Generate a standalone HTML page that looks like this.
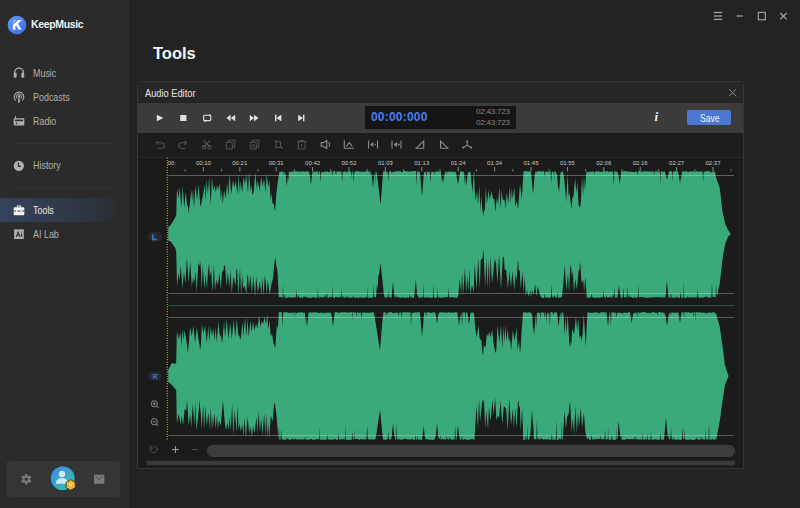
<!DOCTYPE html>
<html><head><meta charset="utf-8">
<style>
*{margin:0;padding:0;box-sizing:border-box}
html,body{width:800px;height:508px;overflow:hidden;background:#232323;font-family:"Liberation Sans",sans-serif}
.abs{position:absolute}
#side{left:0;top:0;width:129px;height:508px;background:#2b2b2b}
.nav{position:absolute;left:33px;font-size:10.5px;color:#b0b0b0;line-height:12px;transform:scaleX(0.85);transform-origin:0 0}
.sep{position:absolute;left:12px;width:100px;height:1px;background:#333}
#dlg{left:137px;top:81px;width:607px;height:388px;border:1px solid #363636;border-radius:4px 4px 0 0;background:#1b1b1b;overflow:hidden}
</style></head><body>
<div id="side" class="abs"></div>
<div class="abs" style="left:0;top:198px;width:118px;height:24px;background:linear-gradient(90deg,#33445e 0%,#303a4a 50%,#2d323b 85%,rgba(43,43,43,0) 100%)"></div>
<div class="sep" style="top:143px"></div>
<div class="sep" style="top:187px"></div>
<div class="abs" style="left:6px;top:461px;width:114px;height:36px;background:#353535;border-radius:4px"></div>

<div class="abs" style="left:31px;top:17px;font-size:10.5px;font-weight:bold;color:#f2f2f2;letter-spacing:-0.35px;line-height:14px">KeepMusic</div>
<div class="nav" style="top:67px">Music</div>
<div class="nav" style="top:91px">Podcasts</div>
<div class="nav" style="top:115px">Radio</div>
<div class="nav" style="top:159px">History</div>
<div class="nav" style="top:204px;color:#ececec">Tools</div>
<div class="nav" style="top:228px">AI Lab</div>

<div class="abs" style="left:153px;top:43px;font-size:16.5px;font-weight:bold;color:#f4f4f4;line-height:20px">Tools</div>

<div id="dlg" class="abs">
  <div class="abs" style="left:0;top:0;width:605px;height:21px;background:#262626"></div>
  <div class="abs" style="left:0;top:20px;width:605px;height:1px;background:#212121"></div>
  <div class="abs" style="left:0;top:21px;width:605px;height:30px;background:#3b3b3b"></div>
  <div class="abs" style="left:0;top:51px;width:605px;height:24px;background:#1d1d1d"></div>
  <div class="abs" style="left:0;top:75px;width:605px;height:1px;background:#2a2a2a"></div>
</div>
<div class="abs" style="left:145px;top:87.5px;font-size:10.3px;color:#e6e6e6;line-height:12px;transform:scaleX(0.9);transform-origin:0 0">Audio Editor</div>

<div class="abs" style="left:365px;top:106px;width:151px;height:23px;background:#151515;border-radius:1px"></div>
<div class="abs" style="left:371px;top:110px;font-size:12px;font-weight:bold;color:#4a7ef0;line-height:14px;letter-spacing:0.2px">00:00:000</div>
<div class="abs" style="left:476px;top:107px;font-size:8px;color:#858585;line-height:10px;letter-spacing:-0.2px">02:43:723</div>
<div class="abs" style="left:476px;top:118px;font-size:8px;color:#858585;line-height:10px;letter-spacing:-0.2px">02:43:723</div>
<div class="abs" style="left:687px;top:110px;width:44px;height:15px;background:#4a78d2;border-radius:2px"></div>
<div class="abs" style="left:699.5px;top:111.5px;font-size:10.3px;color:#f4f4f4;line-height:13px;transform:scaleX(0.83);transform-origin:0 0">Save</div>
<div class="abs" style="left:654.5px;top:109px;font-size:13px;font-family:'Liberation Serif',serif;font-style:italic;font-weight:bold;color:#f0f0f0;line-height:16px">i</div>

<svg class="abs" style="left:0;top:0" width="800" height="508" viewBox="0 0 800 508">
  <!-- waveform -->
  <g>
    <path d="M167.00,229.00 L168.00,227.50 L170.70,225.00 L173.30,221.00 L176.20,215.50 L176.80,194.00 L177.10,188.19 L178.52,198.59 L179.83,187.19 L181.27,207.63 L182.64,185.65 L184.31,208.61 L185.44,191.78 L187.13,204.64 L187.98,206.53 L188.40,213.00 L189.84,203.49 L191.32,189.42 L192.13,200.96 L193.00,188.58 L194.07,208.18 L195.38,185.12 L197.10,200.22 L198.61,184.00 L200.14,204.18 L201.00,207.00 L201.24,203.68 L203.14,194.98 L204.72,184.23 L205.77,201.27 L206.65,179.42 L207.89,193.64 L209.11,177.24 L210.84,205.07 L211.87,176.65 L213.19,190.70 L214.43,185.54 L215.92,192.35 L217.02,184.66 L218.18,189.76 L219.82,183.49 L220.89,200.42 L221.75,189.21 L222.75,203.74 L222.80,204.00 L224.04,190.03 L225.65,198.55 L227.16,182.33 L228.42,196.62 L229.51,173.73 L231.20,194.69 L232.97,179.85 L234.21,187.66 L235.71,181.26 L237.60,194.34 L238.68,174.02 L239.85,192.71 L240.73,180.65 L242.17,192.82 L243.63,176.50 L244.93,184.41 L246.26,174.63 L248.01,192.68 L248.98,172.49 L250.68,191.59 L251.69,184.81 L252.40,195.00 L253.53,192.79 L255.37,172.61 L256.83,189.04 L257.75,180.44 L259.61,191.02 L261.18,176.90 L262.89,186.63 L264.01,177.69 L265.60,192.94 L266.65,174.36 L268.39,187.05 L269.50,180.11 L270.53,199.59 L271.62,193.13 L272.49,203.54 L273.69,203.61 L274.64,209.53 L275.10,211.00 L276.42,192.68 L277.94,181.11 L279.38,171.91 L279.70,171.00 L280.01,171.70 L281.17,171.73 L281.70,171.92 L282.22,171.32 L283.42,171.90 L283.91,176.02 L284.40,171.74 L285.34,172.42 L286.29,181.24 L286.80,186.00 L287.76,176.79 L288.33,180.45 L288.91,171.62 L289.56,171.73 L290.24,172.19 L291.72,171.47 L293.05,171.53 L294.49,171.60 L295.05,171.00 L295.61,171.48 L296.12,171.60 L297.34,171.31 L297.95,171.17 L298.48,171.03 L299.02,171.91 L299.92,171.67 L300.53,171.19 L301.14,171.20 L301.83,172.10 L303.31,171.14 L303.81,171.17 L304.32,171.50 L305.37,171.85 L306.92,171.28 L307.28,171.70 L307.64,171.21 L308.31,171.59 L309.23,172.18 L310.28,177.77 L310.59,183.14 L310.90,183.18 L311.00,184.00 L311.71,177.88 L312.29,172.81 L312.87,171.45 L313.19,171.28 L313.93,171.63 L314.45,171.68 L314.97,171.66 L316.00,171.82 L316.80,171.47 L317.16,171.00 L317.52,171.71 L317.98,171.52 L318.40,175.02 L318.83,171.61 L319.81,171.09 L320.38,182.47 L320.96,171.93 L321.91,171.91 L322.37,173.60 L322.83,171.38 L323.64,171.96 L325.18,171.72 L325.71,171.03 L326.24,171.82 L327.12,171.26 L328.62,172.17 L329.75,171.38 L331.26,171.42 L331.95,171.49 L332.44,176.92 L332.93,171.03 L333.96,171.34 L334.54,171.02 L335.12,171.79 L335.55,171.84 L336.03,175.66 L336.51,171.69 L337.66,171.22 L338.29,171.00 L338.92,171.53 L339.49,171.77 L340.61,171.67 L341.52,171.21 L342.12,182.18 L342.71,171.85 L343.88,171.69 L344.68,171.60 L345.89,171.40 L346.53,172.21 L347.17,171.80 L347.97,171.54 L348.52,171.00 L349.06,171.41 L350.22,171.32 L351.29,171.90 L351.74,178.53 L352.20,171.48 L352.78,171.13 L353.30,183.46 L353.81,171.78 L354.13,171.32 L354.51,174.79 L354.89,171.36 L355.75,171.51 L356.31,171.00 L356.86,171.25 L357.34,171.52 L358.32,171.20 L358.80,171.01 L359.29,171.63 L360.16,172.02 L361.37,171.28 L362.71,172.08 L363.63,172.00 L364.25,171.04 L364.88,171.89 L365.30,171.10 L365.85,171.08 L366.41,171.83 L367.09,171.15 L368.09,171.02 L368.89,172.09 L370.46,171.50 L370.93,176.62 L371.41,171.69 L371.88,175.73 L372.22,179.14 L372.56,183.12 L373.00,188.00 L373.37,184.04 L373.73,179.72 L374.10,176.29 L375.23,171.46 L375.55,184.93 L375.87,171.76 L376.47,171.60 L376.95,174.50 L377.43,178.06 L378.36,186.08 L379.41,195.06 L380.21,201.77 L380.60,205.00 L380.69,203.80 L381.17,197.46 L382.10,185.02 L383.11,171.61 L384.69,171.31 L386.20,171.93 L387.62,171.69 L388.23,181.19 L388.84,171.77 L389.83,171.34 L390.38,171.00 L390.94,171.47 L391.25,171.23 L391.77,173.58 L392.29,171.94 L393.19,171.53 L393.72,172.79 L394.26,171.39 L395.46,171.84 L396.82,171.03 L398.03,171.31 L399.03,171.10 L399.40,171.34 L399.77,171.25 L400.89,171.61 L402.45,172.19 L403.69,171.09 L404.89,171.05 L406.42,171.50 L406.88,171.01 L407.35,171.61 L407.70,171.50 L408.83,171.44 L409.71,171.67 L410.60,171.36 L411.21,171.75 L411.53,171.01 L411.84,171.39 L412.95,171.06 L414.54,171.09 L416.04,171.24 L416.51,186.25 L416.98,171.52 L418.12,171.56 L419.70,171.72 L420.42,176.83 L421.22,187.02 L421.70,193.15 L422.00,197.00 L422.19,194.61 L422.90,185.66 L423.40,179.14 L423.91,172.72 L425.10,171.88 L425.94,171.62 L426.56,177.43 L427.17,171.36 L427.71,171.68 L428.90,171.90 L429.69,171.88 L430.34,182.95 L430.98,171.04 L431.33,171.10 L431.78,173.57 L432.23,171.54 L432.60,171.63 L433.13,172.56 L433.67,171.37 L434.40,171.84 L434.82,176.23 L435.24,171.07 L435.65,171.75 L437.02,171.81 L437.47,171.08 L437.92,171.37 L438.80,171.39 L439.95,172.10 L440.98,171.08 L441.31,181.29 L441.65,174.94 L442.46,179.94 L443.00,182.97 L443.00,183.00 L443.54,179.81 L444.03,176.89 L444.93,172.22 L445.81,171.37 L446.24,175.72 L446.66,171.12 L447.60,172.10 L449.14,171.53 L450.55,171.93 L450.96,171.43 L451.37,171.89 L451.89,171.40 L452.32,171.30 L452.75,171.39 L453.22,171.96 L454.36,171.68 L455.14,172.06 L456.02,171.71 L456.50,175.63 L456.98,178.37 L457.87,184.08 L458.00,185.00 L459.02,177.94 L459.70,174.04 L460.38,171.17 L461.73,171.29 L462.55,171.63 L463.91,171.67 L464.33,185.94 L464.75,171.97 L465.53,179.70 L466.20,186.00 L467.05,178.01 L467.64,174.85 L468.23,171.81 L469.28,172.15 L470.52,171.85 L471.92,186.18 L472.37,192.50 L472.40,193.00 L472.81,187.21 L473.45,177.79 L473.82,172.66 L474.19,171.97 L474.55,189.00 L475.47,200.87 L477.13,190.93 L478.00,203.91 L479.44,185.50 L480.28,210.07 L481.28,194.89 L482.34,209.55 L483.40,216.00 L483.79,211.15 L484.80,210.09 L485.79,187.53 L486.93,203.72 L488.63,189.86 L489.72,199.42 L491.52,191.15 L492.92,198.43 L494.25,199.33 L495.11,208.55 L495.50,211.00 L496.79,197.81 L498.17,204.12 L499.27,186.68 L500.80,208.21 L501.61,189.68 L502.82,200.08 L504.40,199.34 L504.80,202.00 L505.37,209.27 L506.53,192.79 L508.29,203.54 L509.79,186.24 L510.88,203.14 L511.84,187.34 L512.65,199.29 L514.38,186.95 L515.27,206.48 L516.86,200.70 L517.80,209.00 L518.18,207.43 L520.03,183.38 L521.78,199.69 L523.45,171.83 L524.07,171.01 L524.69,171.21 L525.48,171.19 L526.91,171.31 L527.32,171.01 L527.73,171.47 L528.67,171.39 L529.21,171.03 L529.75,171.46 L530.92,171.78 L531.53,177.55 L532.08,183.59 L532.63,189.84 L532.94,193.34 L533.00,194.00 L533.75,185.54 L534.72,174.49 L535.66,171.20 L536.19,171.42 L536.73,171.73 L537.32,171.68 L538.65,171.14 L539.24,171.03 L539.83,171.09 L540.74,171.22 L541.74,171.71 L542.43,171.41 L542.78,171.07 L543.14,171.07 L544.27,171.77 L544.75,177.43 L545.22,171.82 L545.87,171.40 L546.32,171.00 L546.76,171.70 L547.94,171.79 L549.15,171.65 L549.57,172.23 L549.98,171.11 L550.62,171.61 L551.20,184.07 L551.78,171.16 L552.77,171.66 L553.72,171.99 L554.07,180.12 L554.42,171.52 L555.36,171.24 L556.91,174.27 L557.59,181.07 L558.09,188.18 L558.59,190.94 L558.60,191.00 L559.22,184.85 L559.56,192.13 L559.91,178.53 L560.69,171.67 L561.56,172.19 L562.98,171.15 L564.40,179.71 L566.19,202.24 L567.62,173.44 L568.62,196.88 L569.51,192.31 L570.51,201.51 L571.70,209.00 L572.34,198.17 L573.48,196.49 L575.09,178.33 L576.54,192.89 L577.36,181.28 L578.67,205.98 L579.90,206.69 L580.00,208.00 L580.89,203.26 L581.98,176.39 L583.14,195.38 L583.99,174.96 L584.94,190.59 L586.40,171.49 L587.63,171.91 L588.98,172.19 L590.42,171.49 L591.45,172.09 L592.58,171.52 L594.08,171.90 L594.40,175.16 L594.72,171.73 L595.56,171.37 L596.75,171.50 L597.10,171.60 L597.44,171.40 L597.79,171.63 L598.63,171.07 L599.06,171.05 L599.50,171.91 L600.67,172.04 L601.69,171.27 L603.04,172.08 L603.74,171.15 L604.88,171.00 L605.72,171.90 L606.13,171.00 L606.55,171.82 L607.20,171.03 L607.71,171.00 L608.21,171.90 L608.79,172.12 L610.37,171.25 L611.26,172.08 L612.06,171.42 L613.13,171.20 L613.74,185.73 L614.35,171.63 L614.82,171.06 L615.53,171.38 L617.03,171.86 L617.76,172.13 L618.81,177.50 L619.19,180.44 L619.56,183.69 L619.60,184.00 L620.03,180.41 L620.56,179.43 L621.09,171.73 L622.19,171.27 L623.09,171.80 L623.97,171.11 L625.55,171.05 L626.03,172.19 L626.52,171.60 L627.07,171.29 L627.66,171.00 L628.24,171.76 L628.76,171.90 L629.25,171.02 L629.74,171.99 L630.07,171.90 L631.06,171.60 L631.84,171.77 L632.80,171.94 L633.91,172.01 L635.20,172.14 L635.97,171.20 L637.18,171.79 L637.63,176.36 L638.09,171.79 L638.60,171.27 L639.78,171.04 L640.98,171.69 L642.45,171.50 L642.80,171.00 L643.16,171.43 L643.85,171.91 L644.43,171.00 L645.01,171.57 L645.80,171.29 L646.55,171.62 L646.86,171.15 L647.18,171.53 L647.71,171.11 L649.14,171.69 L649.52,171.01 L649.91,171.83 L650.92,171.22 L651.37,171.26 L651.81,171.97 L652.15,171.91 L653.73,171.04 L654.19,175.62 L654.65,171.24 L655.75,171.42 L656.19,171.12 L656.63,171.08 L656.96,171.92 L658.29,171.24 L658.68,172.39 L659.07,171.46 L660.21,171.61 L660.63,184.91 L661.05,171.04 L661.71,171.07 L662.65,172.04 L663.84,171.56 L664.84,171.46 L666.22,176.69 L666.64,178.37 L667.00,180.00 L667.06,179.74 L667.54,177.68 L668.01,175.54 L668.47,174.11 L669.38,171.25 L670.36,171.27 L670.91,171.26 L671.45,171.02 L671.91,171.72 L672.35,181.91 L672.79,171.27 L673.41,171.77 L674.04,171.25 L674.67,171.72 L675.78,171.08 L676.20,171.33 L676.61,171.88 L677.20,171.62 L677.86,171.15 L678.24,172.45 L678.62,175.16 L678.95,176.79 L679.40,179.80 L679.85,182.15 L680.00,183.00 L680.38,180.85 L681.13,176.44 L681.53,176.78 L681.93,171.81 L683.01,171.22 L683.41,171.21 L683.81,171.04 L684.13,171.68 L685.54,171.36 L686.81,171.26 L688.10,172.15 L689.57,171.43 L690.09,171.00 L690.61,171.39 L690.97,171.28 L691.38,171.92 L691.80,171.16 L692.46,171.20 L693.72,171.42 L694.06,171.20 L694.39,171.15 L695.21,171.66 L696.51,171.06 L696.95,171.26 L697.39,171.40 L697.74,171.70 L698.81,171.35 L699.19,171.00 L699.58,171.89 L700.39,171.47 L700.93,171.02 L701.46,171.62 L702.62,171.77 L703.12,182.83 L703.62,171.63 L704.48,171.83 L704.93,171.09 L705.37,171.88 L706.02,171.05 L706.75,171.37 L707.71,171.18 L708.50,171.00 L709.04,171.05 L709.58,171.54 L710.24,171.55 L710.71,173.68 L711.18,171.62 L711.99,172.16 L712.92,171.72 L713.53,171.14 L714.14,171.70 L715.06,171.99 L715.60,176.00 L719.80,188.00 L722.50,212.00 L725.30,224.00 L728.00,230.00 L730.80,234.00 L730.80,234.00 L728.00,237.00 L725.30,243.50 L722.50,258.70 L719.80,283.50 L716.68,297.62 L716.12,284.50 L715.60,294.00 L715.57,297.77 L714.44,296.87 L713.19,297.09 L712.57,297.51 L711.98,282.41 L711.39,297.14 L711.00,297.99 L710.59,296.76 L710.18,297.55 L709.31,297.63 L708.30,297.89 L707.65,296.39 L707.01,297.49 L706.71,297.34 L706.23,294.82 L705.75,297.24 L704.70,297.11 L703.80,297.55 L703.38,297.45 L703.03,297.99 L702.69,297.69 L701.70,297.79 L700.59,297.78 L699.91,297.42 L699.32,297.84 L698.73,297.85 L698.25,297.38 L697.74,288.92 L697.22,297.05 L695.80,297.60 L694.38,297.38 L693.43,297.33 L692.49,297.19 L691.97,298.00 L691.44,297.89 L690.14,296.80 L689.68,297.31 L689.24,297.99 L688.80,297.52 L688.10,297.14 L687.76,295.55 L687.41,297.50 L686.47,297.61 L685.34,297.74 L684.20,297.90 L683.82,281.63 L683.44,297.73 L682.44,297.51 L681.96,297.93 L681.48,297.68 L681.07,297.14 L680.52,291.06 L679.97,297.96 L679.13,297.74 L678.34,297.82 L677.43,297.49 L676.79,296.29 L676.15,297.25 L675.12,297.95 L674.70,297.52 L674.27,297.15 L673.26,297.77 L672.94,297.84 L672.62,297.37 L671.95,297.87 L671.49,297.98 L670.88,292.41 L670.26,297.83 L669.19,297.55 L668.58,298.00 L667.97,291.67 L667.37,285.75 L667.00,282.00 L666.72,281.43 L666.07,291.69 L665.41,297.05 L664.80,297.92 L664.31,296.92 L663.81,297.13 L662.86,297.67 L662.48,297.70 L661.95,296.22 L661.42,297.66 L659.94,297.11 L658.98,297.20 L658.37,297.26 L657.34,297.36 L655.74,297.00 L654.99,297.61 L654.50,297.99 L654.00,297.09 L653.25,297.20 L652.74,297.16 L652.23,297.37 L651.12,297.88 L649.87,297.30 L648.86,297.97 L648.12,297.30 L647.53,297.84 L647.04,297.96 L646.56,297.39 L645.40,297.99 L644.21,297.01 L643.27,297.56 L641.77,296.81 L640.78,297.02 L639.37,297.37 L638.73,297.27 L638.27,284.66 L637.80,297.48 L637.09,297.35 L636.56,298.00 L636.03,297.66 L635.27,297.66 L634.82,296.11 L634.38,297.49 L632.79,297.97 L631.50,297.00 L630.09,296.95 L629.70,297.34 L629.22,294.09 L628.74,297.09 L628.13,297.75 L627.81,297.66 L627.24,285.99 L626.67,297.59 L625.12,297.06 L624.08,297.59 L623.45,287.64 L622.83,297.27 L622.02,297.77 L621.50,297.95 L620.98,297.76 L619.88,292.54 L619.00,285.00 L618.74,287.18 L618.29,290.85 L617.96,292.44 L617.62,296.35 L616.77,297.56 L616.18,297.63 L615.58,297.72 L615.05,297.04 L614.56,287.08 L614.06,297.57 L613.68,297.59 L613.07,293.25 L612.45,297.72 L611.64,297.91 L611.00,295.35 L610.36,297.68 L609.39,297.06 L608.98,297.49 L608.45,297.29 L607.92,297.66 L607.21,297.48 L606.59,295.46 L605.98,297.39 L604.92,297.61 L604.24,297.28 L603.66,289.99 L603.07,297.57 L601.73,297.03 L600.39,297.55 L599.33,297.86 L598.58,297.25 L598.06,298.00 L597.54,297.42 L596.20,297.76 L595.11,297.85 L594.50,297.92 L593.90,297.87 L593.03,296.93 L591.97,297.32 L591.35,293.27 L590.74,297.83 L589.82,297.22 L588.74,297.68 L587.56,297.87 L586.83,297.30 L585.21,276.58 L584.16,291.86 L583.21,279.78 L581.62,283.15 L580.38,264.92 L580.00,262.00 L579.43,269.40 L578.50,271.48 L576.86,289.47 L575.19,278.55 L573.95,292.99 L572.81,270.11 L571.89,277.89 L571.00,265.00 L570.21,268.00 L569.00,292.75 L568.01,273.55 L566.27,291.31 L564.82,264.96 L563.19,284.96 L561.90,297.43 L561.20,297.11 L560.85,298.00 L560.50,297.04 L559.25,297.38 L558.08,297.91 L557.60,291.99 L557.13,297.19 L556.83,297.67 L556.36,297.92 L555.89,297.05 L555.39,297.94 L554.80,294.77 L554.21,297.33 L553.80,297.62 L553.30,295.84 L552.79,297.24 L552.01,297.37 L551.44,284.32 L550.86,297.24 L549.77,297.75 L548.93,297.75 L547.77,297.66 L546.87,297.90 L546.51,297.99 L546.15,297.05 L545.13,297.55 L544.69,292.87 L544.26,297.97 L542.76,297.93 L541.96,297.83 L540.83,296.96 L539.32,292.51 L537.76,285.99 L536.46,296.77 L535.16,283.95 L533.57,294.84 L531.90,290.03 L530.99,297.76 L530.17,290.34 L528.35,296.79 L527.00,289.91 L525.82,296.50 L524.83,277.29 L523.58,293.03 L522.53,271.14 L520.76,289.24 L519.77,270.39 L518.77,269.67 L518.00,260.00 L517.89,260.76 L516.51,281.28 L515.46,273.94 L514.29,290.69 L512.46,270.84 L510.97,287.99 L509.57,270.60 L507.83,288.64 L506.31,270.59 L504.66,269.13 L504.00,258.00 L502.88,256.02 L500.99,290.06 L499.11,255.11 L497.37,283.68 L496.11,262.70 L495.13,260.14 L495.00,258.00 L493.55,270.18 L491.94,283.15 L490.62,255.61 L489.70,288.33 L488.73,259.71 L487.46,288.76 L486.47,258.08 L485.14,287.50 L483.51,251.55 L483.00,250.00 L482.61,257.65 L480.75,260.20 L479.85,289.06 L478.18,258.00 L476.59,290.12 L474.70,263.64 L473.66,292.82 L471.96,284.75 L470.37,294.61 L469.42,268.39 L468.33,292.67 L467.41,275.81 L466.27,292.93 L464.96,268.85 L463.07,295.34 L462.13,272.21 L461.18,293.50 L459.59,279.10 L458.36,295.44 L456.89,297.94 L455.99,297.63 L455.02,297.31 L454.41,297.99 L453.80,297.55 L452.51,297.21 L451.51,296.90 L450.60,297.07 L450.27,298.00 L449.94,297.77 L449.21,297.23 L448.67,286.94 L448.13,297.74 L447.42,296.80 L445.87,297.51 L444.84,296.95 L444.00,297.83 L443.45,298.00 L442.90,297.34 L441.79,297.73 L441.16,297.99 L440.52,297.92 L440.20,297.08 L439.84,297.86 L439.48,297.21 L438.69,297.16 L438.32,297.33 L437.95,297.08 L437.52,297.27 L437.20,285.80 L436.88,297.99 L435.80,297.56 L435.21,298.00 L434.62,297.80 L433.94,297.33 L433.54,283.48 L433.15,297.12 L432.47,297.69 L431.94,297.45 L431.33,297.99 L430.71,297.72 L429.13,297.82 L427.84,297.27 L427.46,297.84 L426.90,297.01 L426.35,297.11 L425.89,297.41 L425.40,297.99 L424.91,297.68 L424.03,297.35 L423.66,282.53 L423.29,297.09 L422.25,297.38 L420.67,297.61 L420.21,297.59 L419.75,297.99 L419.30,297.80 L418.53,297.29 L417.08,294.36 L415.80,280.00 L415.70,281.11 L414.59,293.62 L413.86,297.91 L413.49,297.96 L413.12,297.93 L411.86,296.94 L411.20,297.62 L410.51,297.22 L409.92,294.17 L409.34,297.00 L408.56,297.92 L407.84,297.75 L406.95,297.07 L406.32,298.00 L405.69,297.68 L404.22,297.64 L402.63,297.36 L401.82,297.67 L401.49,296.96 L401.15,297.59 L400.29,297.98 L399.73,297.36 L399.17,297.83 L397.81,297.01 L396.88,297.43 L396.44,294.57 L396.00,297.72 L394.42,296.21 L393.96,291.95 L393.45,286.84 L393.00,282.00 L392.94,282.57 L391.76,295.14 L391.36,298.00 L390.96,297.88 L389.71,296.96 L388.71,297.48 L388.27,290.64 L387.83,297.25 L386.24,297.25 L384.84,297.97 L383.87,294.75 L382.72,283.55 L381.56,272.42 L381.19,268.82 L380.88,265.73 L380.60,263.00 L380.57,263.20 L379.33,272.60 L378.86,276.27 L378.38,274.29 L377.89,284.02 L376.88,291.50 L376.51,283.56 L376.15,296.89 L375.02,296.88 L373.94,297.77 L373.43,284.36 L372.92,297.85 L372.28,297.17 L371.87,297.99 L371.46,297.88 L371.12,297.95 L370.71,297.92 L370.30,297.59 L368.86,297.82 L367.69,297.61 L367.38,286.69 L367.07,297.21 L366.12,297.14 L364.86,297.40 L363.73,297.71 L362.79,297.64 L362.16,297.58 L361.53,297.53 L359.97,297.43 L359.10,297.36 L358.50,297.95 L357.91,297.80 L356.87,297.79 L355.68,297.19 L355.15,298.00 L354.61,297.75 L353.73,297.48 L353.31,294.63 L352.90,297.60 L351.75,297.65 L351.38,297.81 L351.01,297.63 L350.55,297.54 L349.90,297.79 L349.25,297.50 L348.34,297.55 L347.51,297.45 L346.95,295.13 L346.39,297.83 L345.37,297.70 L344.22,297.46 L343.78,295.47 L343.35,297.87 L342.39,297.36 L341.91,297.52 L341.48,288.05 L341.04,297.01 L340.06,297.17 L339.68,297.03 L339.30,297.27 L338.03,297.28 L337.13,297.57 L335.77,296.82 L334.92,297.91 L334.43,297.82 L333.94,297.76 L332.96,297.79 L332.58,284.76 L332.20,297.52 L330.65,297.10 L329.09,297.26 L328.68,297.75 L328.36,298.00 L328.03,297.99 L327.67,297.87 L327.16,292.19 L326.64,297.16 L325.96,297.32 L325.36,293.91 L324.76,297.04 L323.63,297.72 L323.18,296.72 L322.74,297.28 L321.50,297.44 L320.40,297.04 L319.27,297.46 L318.35,297.90 L317.95,288.05 L317.54,297.39 L317.07,297.70 L316.71,297.99 L316.35,297.28 L315.44,297.97 L314.63,297.00 L313.89,297.63 L312.93,297.01 L311.49,297.94 L310.32,297.75 L309.74,297.99 L309.16,297.79 L308.51,297.62 L307.99,297.91 L307.48,297.59 L306.47,297.39 L306.13,294.96 L305.78,297.16 L304.68,297.13 L304.05,295.69 L303.42,297.61 L302.40,297.95 L302.02,296.42 L301.64,297.75 L301.06,297.64 L300.51,297.81 L299.95,297.50 L299.04,297.45 L298.50,294.52 L297.97,297.03 L296.98,297.46 L296.38,289.39 L295.78,297.77 L294.93,296.99 L293.87,297.81 L293.12,297.08 L292.75,297.37 L292.38,297.78 L291.75,297.99 L291.37,297.79 L290.98,297.06 L290.08,297.82 L289.77,296.98 L289.46,297.56 L287.93,297.21 L287.00,297.69 L286.46,297.99 L285.92,297.91 L285.26,297.75 L284.77,293.66 L284.28,297.61 L283.42,297.46 L283.01,284.30 L282.60,297.31 L281.91,297.54 L280.77,296.91 L279.37,296.92 L278.76,297.32 L277.55,271.39 L276.11,264.95 L275.50,257.00 L274.32,263.48 L273.06,278.05 L271.20,285.34 L269.72,294.93 L267.84,280.05 L266.77,294.01 L265.00,274.76 L263.44,295.50 L262.36,277.25 L261.32,295.59 L259.75,280.59 L257.92,292.64 L256.16,276.86 L255.18,296.50 L253.34,276.16 L251.85,294.04 L250.47,275.37 L248.96,288.57 L248.00,275.00 L247.30,275.78 L246.47,294.11 L244.57,285.75 L243.09,288.42 L242.28,274.31 L241.11,295.57 L240.01,268.32 L238.21,295.27 L237.20,270.82 L236.60,268.00 L235.38,286.01 L233.53,276.24 L231.68,293.02 L230.57,270.03 L229.26,287.54 L227.76,272.12 L226.66,286.86 L225.09,266.86 L224.00,265.00 L223.69,269.85 L222.04,272.02 L220.77,289.57 L219.40,272.62 L217.69,285.49 L216.34,279.56 L214.98,290.36 L213.92,264.86 L212.38,292.58 L211.18,270.23 L209.65,276.39 L209.00,263.00 L207.78,274.38 L206.95,289.55 L205.63,274.39 L204.37,289.37 L202.67,265.27 L201.81,291.30 L200.83,268.18 L200.00,260.50 L199.69,265.73 L198.42,263.42 L196.58,292.38 L195.68,271.66 L193.88,283.51 L193.05,277.36 L191.81,287.21 L190.25,261.68 L188.55,282.80 L187.00,259.00 L186.76,259.74 L185.47,284.10 L183.95,271.30 L182.48,288.84 L180.79,265.47 L179.58,279.89 L178.62,272.64 L177.10,286.59 L176.80,276.00 L176.20,252.00 L175.30,248.00 L170.70,241.50 L168.00,240.50 L167.00,239.00Z" fill="#3aa97b"/>
    <path d="M167.00,372.00 L168.00,370.00 L171.90,363.00 L175.30,364.00 L176.20,362.00 L176.80,335.00 L177.10,331.63 L178.65,339.49 L180.39,331.82 L181.44,346.29 L182.49,328.15 L183.43,340.78 L184.47,330.36 L185.74,336.99 L187.21,346.07 L187.70,352.00 L188.32,349.22 L190.07,326.55 L191.76,336.52 L193.38,325.37 L195.05,342.67 L196.79,327.25 L198.42,338.60 L199.69,345.72 L200.00,350.40 L200.96,344.44 L201.89,324.49 L203.57,333.66 L205.13,325.39 L206.75,342.68 L208.30,325.57 L209.29,341.41 L210.67,326.80 L211.97,336.37 L213.21,327.88 L214.55,340.29 L215.61,326.63 L216.81,342.28 L218.33,320.57 L219.56,334.18 L221.38,337.27 L222.00,343.50 L222.34,341.12 L224.06,321.31 L225.04,336.74 L226.79,319.27 L228.47,338.85 L230.21,322.23 L231.80,339.07 L233.67,319.46 L235.26,337.13 L236.74,318.80 L238.19,334.52 L239.79,336.74 L240.00,339.40 L240.92,337.47 L242.47,322.19 L243.52,336.98 L245.03,316.78 L246.43,336.80 L247.71,318.25 L248.61,337.09 L250.51,320.61 L251.64,332.50 L253.10,321.10 L254.41,330.84 L256.13,323.22 L257.30,328.93 L259.17,315.38 L260.49,326.69 L261.61,321.13 L262.97,324.11 L264.58,316.97 L266.13,324.15 L267.22,313.91 L268.41,329.47 L269.52,319.74 L270.71,336.52 L271.95,333.40 L273.58,343.62 L274.38,345.27 L275.00,349.00 L275.39,345.79 L276.80,325.49 L277.92,328.33 L278.87,312.13 L280.30,312.03 L280.70,312.36 L281.11,312.13 L281.73,312.04 L282.34,327.40 L282.95,312.54 L283.36,312.39 L284.86,312.15 L285.46,312.48 L286.07,312.01 L286.67,312.37 L287.28,312.26 L288.60,313.12 L289.72,312.53 L290.89,313.01 L292.39,312.81 L292.74,313.31 L293.08,312.53 L293.65,312.36 L294.34,312.11 L294.65,316.51 L294.96,312.72 L296.04,312.97 L297.07,313.00 L298.38,312.31 L298.95,312.00 L299.52,313.00 L300.24,312.00 L300.81,312.67 L301.39,312.03 L301.92,312.85 L302.55,312.06 L303.18,312.85 L303.85,312.91 L304.94,312.54 L305.40,322.78 L305.86,315.75 L306.50,321.99 L306.86,325.81 L307.00,327.00 L307.23,324.81 L307.69,320.48 L308.20,315.13 L308.70,312.50 L309.47,312.26 L310.82,312.51 L312.38,312.84 L312.98,312.01 L313.58,312.15 L313.93,313.11 L314.79,312.53 L315.30,312.06 L315.81,312.01 L316.52,312.41 L317.34,312.91 L317.88,312.55 L318.43,312.74 L318.82,313.12 L320.24,312.82 L321.56,312.71 L322.41,312.06 L322.97,314.08 L323.52,312.64 L324.37,312.93 L325.85,312.57 L326.43,313.02 L327.02,312.41 L328.16,312.67 L328.79,312.22 L329.42,312.91 L330.34,312.41 L330.67,312.87 L330.99,312.81 L332.00,317.36 L333.00,327.00 L333.01,326.90 L333.69,320.23 L334.04,316.71 L334.39,313.97 L334.88,312.35 L335.68,312.11 L336.40,312.21 L336.72,312.37 L337.04,312.16 L337.36,312.06 L338.19,313.06 L339.45,312.84 L340.85,312.19 L341.50,312.62 L342.62,312.21 L343.93,312.28 L344.37,312.06 L344.82,312.58 L345.62,312.34 L346.94,312.86 L347.46,312.01 L347.99,312.97 L348.52,312.26 L349.43,312.70 L349.88,312.00 L350.34,312.58 L351.01,312.28 L351.95,312.09 L352.25,322.37 L352.55,312.10 L353.56,312.54 L354.59,312.24 L354.89,313.23 L355.19,312.15 L356.30,312.75 L356.73,317.36 L357.16,312.11 L358.12,312.76 L359.67,312.72 L361.04,312.62 L361.53,319.52 L362.02,312.38 L362.34,312.41 L363.37,312.83 L363.86,312.44 L364.36,312.59 L365.16,312.53 L366.30,312.87 L367.64,312.67 L368.80,312.50 L369.18,312.60 L369.57,312.90 L369.90,312.85 L370.46,312.75 L371.02,312.16 L372.02,312.40 L372.51,312.00 L373.01,312.80 L373.98,312.51 L374.61,316.42 L375.94,324.76 L377.41,334.32 L378.05,337.98 L378.68,342.19 L379.39,346.63 L380.00,350.50 L380.50,344.18 L381.07,337.73 L381.65,329.34 L382.33,321.38 L383.40,312.73 L383.99,312.03 L384.58,312.50 L385.75,312.02 L386.32,316.60 L386.90,312.57 L387.47,313.15 L388.73,312.47 L389.24,312.07 L389.75,312.12 L390.70,312.56 L391.19,312.02 L391.67,312.06 L392.00,312.86 L393.49,313.19 L394.23,312.76 L395.00,312.79 L395.39,313.29 L395.77,312.71 L396.59,312.17 L397.14,313.19 L397.69,312.62 L398.21,312.11 L398.67,317.49 L399.13,312.44 L399.64,312.98 L400.50,312.56 L401.32,312.60 L401.81,319.31 L402.30,312.00 L403.30,312.51 L404.14,312.14 L404.69,312.09 L405.23,312.88 L405.93,312.36 L406.54,312.00 L407.15,312.62 L408.05,312.21 L409.22,312.56 L410.53,312.34 L411.08,326.61 L411.63,312.74 L412.24,312.92 L413.70,312.71 L415.25,312.58 L415.75,312.00 L416.25,312.69 L416.81,312.50 L417.61,312.05 L418.11,312.38 L418.61,312.31 L419.79,312.07 L420.33,316.58 L420.87,323.18 L421.36,328.95 L421.87,335.63 L422.00,337.00 L422.39,332.34 L422.71,328.43 L423.12,326.94 L423.54,318.37 L424.22,312.16 L425.78,312.77 L426.14,317.57 L426.49,312.67 L427.02,312.62 L427.82,312.22 L428.47,312.00 L429.11,312.36 L430.22,313.01 L431.45,312.95 L432.01,312.02 L432.57,312.97 L432.92,312.29 L433.63,312.53 L434.52,312.08 L435.55,313.38 L436.27,318.22 L437.00,324.00 L437.08,323.42 L437.44,320.52 L437.79,317.85 L438.27,314.00 L439.55,312.56 L440.57,312.18 L441.00,312.52 L441.43,312.30 L442.35,312.84 L442.67,312.01 L442.99,312.35 L444.04,312.75 L445.00,312.50 L446.11,312.13 L446.93,313.11 L448.34,312.12 L449.66,312.49 L450.26,312.44 L450.85,312.52 L451.34,313.03 L452.39,312.28 L452.81,312.02 L453.24,312.84 L454.41,312.86 L454.81,312.23 L455.21,312.26 L455.68,312.23 L456.01,312.01 L456.34,312.65 L457.47,312.03 L457.88,317.09 L458.28,319.31 L459.00,326.00 L459.09,325.12 L459.52,321.35 L459.94,317.39 L460.40,312.95 L460.72,319.91 L461.05,312.41 L461.50,312.97 L462.07,327.25 L462.64,312.33 L463.42,312.61 L463.75,312.57 L464.08,312.40 L465.09,312.57 L465.49,323.51 L465.89,312.26 L467.00,312.86 L467.52,312.98 L468.03,316.69 L468.72,321.91 L469.00,324.00 L469.30,323.37 L469.87,317.58 L470.64,312.15 L471.05,312.09 L471.46,312.92 L472.26,312.81 L472.63,312.58 L473.01,312.86 L473.99,312.39 L474.44,326.50 L474.89,312.65 L475.23,327.38 L476.59,337.17 L478.45,325.44 L479.61,337.66 L481.42,340.97 L482.69,354.25 L483.00,356.00 L483.82,345.18 L485.49,347.42 L486.89,333.94 L488.20,336.46 L489.01,331.60 L490.80,337.10 L492.15,329.07 L493.28,341.41 L494.72,349.45 L495.00,353.00 L496.28,350.75 L497.51,324.68 L499.31,343.02 L500.97,324.64 L502.35,348.63 L503.26,325.97 L504.44,342.42 L505.28,324.29 L506.39,340.88 L507.87,328.46 L508.90,341.91 L510.00,338.00 L510.06,337.76 L511.06,350.80 L512.84,330.15 L514.66,341.10 L516.51,327.46 L517.59,349.79 L519.07,340.38 L520.00,353.00 L520.62,348.10 L521.53,332.50 L523.10,312.30 L524.63,312.52 L525.14,312.73 L525.64,312.17 L526.29,312.22 L526.75,313.40 L527.22,312.17 L527.94,313.02 L528.69,312.18 L529.61,312.41 L530.31,312.70 L531.42,312.62 L532.39,316.87 L532.89,327.09 L533.40,328.16 L533.92,334.14 L534.00,335.00 L535.11,322.49 L535.86,314.20 L536.38,328.15 L536.90,312.67 L537.97,312.83 L538.42,312.47 L538.87,312.69 L539.64,313.10 L540.29,312.24 L540.75,320.18 L541.21,312.44 L542.11,312.41 L542.65,312.01 L543.18,312.64 L544.26,312.65 L544.79,318.87 L545.32,312.45 L545.91,312.65 L546.52,322.60 L547.13,312.75 L547.71,312.65 L548.20,314.74 L548.68,312.87 L549.34,312.57 L549.88,327.28 L550.43,312.59 L551.53,312.05 L553.11,312.98 L553.60,315.49 L554.09,312.23 L554.43,312.55 L555.49,312.56 L555.89,312.00 L556.29,312.22 L557.04,313.18 L557.94,319.95 L558.29,324.34 L558.60,326.00 L558.63,325.73 L559.75,316.06 L560.57,312.18 L561.07,320.61 L561.57,312.50 L562.38,312.11 L562.79,314.91 L563.20,312.10 L563.55,315.26 L564.63,334.86 L565.55,314.86 L566.38,332.86 L567.77,314.68 L569.55,347.47 L570.40,340.89 L571.00,347.00 L571.25,345.12 L572.21,328.61 L574.05,334.44 L575.94,316.84 L577.17,330.38 L578.21,317.73 L579.47,337.87 L580.59,335.58 L581.00,341.00 L582.48,336.17 L583.83,314.36 L585.67,346.40 L587.45,312.37 L587.78,312.07 L588.11,312.48 L589.27,312.13 L589.80,313.03 L590.32,313.00 L591.45,312.67 L592.05,312.66 L592.66,312.93 L593.53,312.58 L593.85,312.76 L594.17,312.27 L594.99,312.48 L595.38,312.86 L595.76,312.71 L596.27,312.15 L596.83,312.10 L597.39,312.62 L598.00,313.16 L599.57,313.17 L600.96,312.21 L601.59,312.00 L602.22,312.51 L602.63,312.65 L603.44,312.10 L604.53,312.38 L605.15,312.01 L605.78,312.71 L606.36,312.14 L607.03,317.30 L607.53,321.84 L608.00,326.00 L608.02,325.82 L609.11,316.25 L609.46,312.42 L609.81,312.81 L610.21,312.28 L610.86,326.08 L611.51,312.53 L611.85,312.21 L613.13,312.48 L613.63,312.19 L614.13,312.95 L614.90,312.86 L615.72,312.14 L616.31,317.82 L616.90,312.81 L617.46,313.07 L618.98,312.61 L619.33,312.08 L619.68,312.97 L620.57,312.99 L621.65,312.88 L622.23,314.38 L622.80,313.00 L623.52,312.32 L623.87,313.87 L624.21,312.32 L624.97,312.82 L626.03,312.75 L627.54,313.02 L628.38,312.01 L629.80,312.16 L630.31,313.63 L630.82,317.70 L631.25,320.44 L631.60,323.00 L632.06,319.76 L632.56,317.91 L633.06,313.17 L633.38,312.65 L633.82,314.24 L634.26,312.89 L634.87,312.83 L635.63,312.53 L636.09,314.07 L636.54,312.14 L637.02,312.90 L637.36,317.66 L637.69,312.73 L638.18,312.04 L638.99,312.54 L639.50,313.84 L640.01,312.16 L640.77,313.05 L641.73,312.60 L642.34,312.00 L642.94,312.10 L643.97,312.09 L644.61,312.37 L645.79,312.46 L646.49,312.40 L647.52,313.13 L648.41,312.89 L648.98,312.66 L649.55,312.37 L649.90,312.97 L650.51,313.79 L651.13,312.82 L652.04,312.33 L652.48,312.00 L652.93,312.22 L654.07,312.15 L654.49,312.00 L654.92,312.70 L655.58,312.98 L656.87,312.59 L657.44,315.50 L658.00,312.50 L659.12,312.07 L660.56,312.32 L661.93,312.88 L663.01,312.10 L663.66,312.66 L664.14,314.73 L664.62,312.52 L665.26,314.41 L666.07,319.73 L667.00,326.00 L667.46,323.04 L668.83,313.95 L669.72,313.19 L670.44,312.19 L670.89,316.17 L671.34,312.68 L671.74,312.10 L672.99,312.66 L673.86,312.56 L674.47,312.71 L675.08,312.96 L675.82,312.72 L677.25,312.16 L678.07,312.42 L678.45,313.96 L678.83,314.70 L679.15,317.08 L679.96,322.68 L680.00,323.00 L680.70,318.23 L681.66,312.33 L682.21,312.05 L682.77,312.28 L683.63,312.53 L683.95,320.29 L684.27,312.13 L684.63,312.61 L685.78,312.03 L686.49,312.56 L687.03,312.00 L687.58,312.79 L688.24,312.05 L689.32,312.66 L689.86,312.38 L690.39,312.90 L691.53,312.85 L693.09,312.36 L693.40,318.71 L693.71,312.34 L694.86,312.00 L695.21,322.75 L695.55,312.05 L696.48,312.29 L697.04,312.00 L697.59,312.40 L698.45,312.81 L699.25,312.06 L700.29,312.44 L700.86,312.79 L701.43,312.94 L701.94,312.84 L702.62,312.41 L703.95,312.40 L704.94,312.73 L705.28,313.65 L705.61,312.96 L706.31,312.77 L707.67,313.15 L709.12,312.53 L710.26,312.36 L710.74,313.10 L711.22,312.93 L712.31,312.36 L713.49,312.47 L714.68,312.45 L715.31,313.72 L715.60,314.00 L715.94,312.86 L719.80,327.00 L722.50,346.00 L725.00,365.60 L728.60,376.00 L728.60,376.00 L725.00,385.00 L722.50,401.00 L719.80,420.70 L716.18,440.00 L715.85,439.99 L715.60,438.00 L715.52,439.07 L714.18,439.93 L712.72,438.90 L711.71,439.02 L711.10,439.99 L710.49,439.52 L709.49,439.90 L709.02,423.84 L708.54,439.33 L707.63,439.41 L707.31,439.41 L707.00,439.77 L706.32,439.13 L705.91,439.62 L705.55,428.31 L705.19,439.67 L703.73,439.40 L702.69,439.45 L702.17,438.33 L701.65,439.37 L701.32,439.62 L700.80,435.70 L700.29,439.63 L699.53,439.72 L699.14,439.70 L698.70,438.71 L698.25,439.93 L697.44,439.08 L696.87,436.43 L696.30,439.15 L695.19,439.19 L694.81,439.98 L694.43,439.87 L693.88,439.90 L693.32,439.99 L692.75,439.95 L691.63,439.65 L691.15,439.35 L690.67,439.46 L689.71,439.83 L689.09,439.48 L688.46,439.75 L688.05,439.64 L687.48,439.98 L686.91,439.83 L686.36,439.82 L685.83,440.00 L685.31,439.15 L684.78,439.28 L684.38,428.68 L683.97,439.02 L682.95,439.24 L682.41,426.87 L681.87,439.14 L680.91,439.69 L680.15,439.90 L679.63,439.90 L679.11,439.64 L678.13,439.13 L677.55,439.39 L676.96,439.62 L676.12,439.92 L675.65,439.61 L675.19,439.87 L674.73,439.59 L673.66,439.51 L673.13,437.27 L672.59,439.79 L671.89,439.51 L671.55,425.39 L671.21,439.63 L670.89,439.05 L670.37,432.30 L669.84,439.23 L669.04,439.57 L668.56,433.81 L668.07,439.35 L667.18,430.52 L666.82,426.74 L666.47,423.08 L666.00,418.00 L665.14,427.46 L664.69,431.97 L664.33,436.26 L663.97,439.90 L662.71,439.25 L662.06,439.99 L661.69,439.79 L661.33,439.85 L660.80,439.41 L660.25,432.90 L659.70,439.77 L658.72,439.91 L657.74,439.30 L657.09,440.00 L656.44,439.48 L655.78,439.47 L655.06,439.03 L654.62,439.76 L654.26,439.18 L653.91,439.71 L652.96,439.54 L652.50,439.88 L652.04,439.66 L651.60,439.56 L651.03,431.55 L650.45,439.90 L650.07,439.30 L649.64,439.98 L649.21,439.98 L648.06,439.32 L647.66,439.03 L647.34,432.17 L647.03,439.20 L646.11,439.49 L645.71,437.00 L645.32,439.89 L644.03,439.55 L643.04,439.40 L642.65,432.44 L642.26,439.91 L641.62,439.36 L641.17,440.00 L640.71,439.34 L639.42,439.13 L638.51,439.93 L637.75,438.81 L637.13,439.78 L636.74,438.48 L636.35,439.74 L636.00,439.55 L635.65,434.99 L635.30,439.85 L634.87,439.70 L634.24,436.97 L633.60,439.90 L632.98,438.89 L631.70,439.30 L630.29,438.93 L629.07,439.57 L628.54,439.05 L627.97,438.58 L627.40,439.57 L626.47,439.04 L625.19,439.56 L624.13,439.97 L623.49,439.27 L623.08,440.00 L622.67,439.88 L621.65,439.20 L621.11,434.53 L620.58,439.34 L619.93,433.20 L619.02,423.70 L619.00,423.50 L618.48,422.50 L617.94,434.99 L617.34,439.08 L616.47,439.14 L616.17,426.74 L615.86,439.50 L614.78,439.98 L614.32,439.88 L613.84,440.00 L613.36,439.80 L612.38,439.45 L611.90,432.88 L611.43,439.56 L610.85,439.33 L610.25,440.00 L609.66,439.96 L608.46,439.18 L608.09,427.22 L607.72,439.67 L607.19,439.02 L606.72,439.95 L606.25,439.05 L605.62,439.46 L605.01,429.18 L604.41,439.69 L603.44,439.13 L603.11,438.71 L602.79,439.09 L601.67,439.14 L601.12,439.59 L600.59,435.32 L600.06,439.30 L599.10,438.94 L598.02,438.84 L596.74,439.00 L596.03,439.68 L595.71,437.24 L595.39,439.16 L594.92,439.54 L594.50,439.72 L594.08,439.56 L592.49,439.34 L592.11,439.15 L591.47,434.01 L590.83,439.66 L590.22,439.58 L589.26,439.90 L588.66,436.26 L588.06,439.01 L586.90,438.90 L585.32,431.77 L583.92,412.58 L582.03,427.90 L580.84,408.20 L580.60,410.00 L578.96,427.50 L577.97,411.38 L576.91,434.06 L575.26,406.00 L574.16,435.76 L572.69,417.69 L571.69,432.91 L570.20,403.61 L569.60,403.00 L568.78,413.49 L567.10,417.05 L565.92,428.87 L564.56,410.61 L563.47,428.06 L562.68,439.73 L561.93,439.25 L561.60,420.52 L561.26,439.11 L560.49,439.78 L559.95,437.94 L559.41,439.03 L558.69,439.47 L558.08,440.00 L557.48,439.96 L556.93,439.93 L556.39,420.58 L555.85,439.79 L555.09,439.56 L554.55,439.97 L554.00,439.53 L552.85,439.69 L552.44,439.88 L551.85,432.80 L551.26,439.70 L550.82,439.60 L550.38,439.96 L549.95,439.65 L548.89,439.01 L548.27,439.82 L547.66,439.18 L546.75,439.20 L546.13,439.60 L545.51,439.48 L544.32,439.23 L543.82,439.68 L543.31,439.54 L542.41,439.10 L541.42,439.12 L541.01,435.60 L540.61,439.06 L539.41,439.89 L538.91,437.64 L538.41,439.02 L537.45,439.18 L536.89,420.18 L536.32,439.27 L535.49,439.22 L534.67,439.54 L533.93,438.63 L533.39,425.79 L532.85,422.50 L532.00,410.00 L531.90,411.48 L531.55,416.64 L531.21,421.87 L530.31,434.62 L529.01,439.82 L527.93,439.54 L527.50,425.43 L527.08,439.21 L526.49,439.34 L525.85,434.42 L525.20,439.98 L524.10,439.64 L523.34,439.88 L522.12,408.77 L520.75,431.06 L519.88,407.59 L519.07,406.43 L518.60,400.00 L517.90,404.47 L516.50,428.57 L515.28,407.67 L513.88,427.92 L512.86,408.80 L510.99,425.60 L509.29,399.11 L507.59,430.56 L506.13,408.75 L505.05,407.55 L505.00,407.00 L503.77,406.43 L502.24,424.22 L500.46,400.57 L499.22,417.39 L497.77,415.91 L496.43,420.53 L495.12,397.12 L495.00,400.00 L493.37,414.52 L492.45,399.42 L490.62,420.85 L488.92,407.13 L488.03,430.09 L486.23,410.79 L485.19,428.96 L484.03,402.93 L483.00,399.00 L482.94,399.75 L481.92,403.73 L480.08,421.67 L479.01,398.06 L478.07,430.26 L476.71,405.70 L475.68,419.09 L474.50,439.66 L473.90,440.00 L473.31,439.17 L472.11,439.08 L471.53,438.87 L470.94,439.68 L470.40,439.06 L469.85,440.00 L469.30,439.18 L468.52,439.75 L467.96,439.82 L467.35,439.95 L466.74,439.80 L466.01,439.72 L465.17,438.81 L464.50,439.31 L464.14,439.22 L463.82,439.99 L463.49,439.85 L462.45,439.56 L461.94,434.90 L461.42,439.40 L460.09,439.66 L458.92,434.50 L458.44,428.31 L458.00,426.00 L457.95,426.41 L456.58,438.85 L455.73,439.92 L455.15,425.59 L454.57,439.18 L454.02,439.85 L453.37,439.07 L452.72,439.74 L452.29,439.97 L451.97,440.00 L451.65,439.56 L450.28,439.04 L449.72,439.29 L449.23,436.13 L448.75,439.87 L448.07,439.74 L447.33,439.00 L446.74,436.01 L446.16,439.53 L445.36,439.98 L444.92,437.99 L444.48,439.93 L444.11,439.03 L443.73,439.70 L443.35,439.47 L442.66,439.22 L442.23,438.86 L441.80,439.08 L441.19,439.52 L440.81,434.22 L440.43,439.80 L440.03,439.55 L439.39,437.95 L438.75,439.30 L438.03,434.64 L437.48,428.11 L437.00,423.50 L436.94,424.16 L436.22,432.02 L435.81,435.95 L435.26,437.81 L434.70,439.16 L433.55,439.78 L433.09,439.99 L432.62,439.89 L431.09,439.67 L430.19,439.62 L429.63,439.96 L429.08,439.59 L428.06,439.53 L427.50,439.50 L426.94,439.04 L425.62,439.57 L424.77,436.06 L423.75,427.32 L423.60,426.00 L423.39,427.91 L423.03,431.32 L422.63,434.75 L422.04,440.00 L421.45,439.45 L420.90,439.47 L420.30,439.97 L419.70,439.32 L418.90,439.80 L418.04,439.73 L417.63,435.82 L417.22,439.84 L416.09,439.35 L415.63,433.51 L415.16,440.00 L414.08,439.69 L413.04,439.44 L412.64,438.22 L412.24,439.87 L411.68,439.25 L411.35,438.91 L411.01,439.54 L409.54,439.73 L409.16,439.05 L408.55,439.60 L407.94,439.67 L406.70,438.94 L405.86,438.85 L404.26,438.92 L403.07,439.25 L401.60,439.64 L400.96,439.46 L400.52,440.00 L400.08,439.19 L399.10,439.54 L398.11,439.01 L397.79,440.00 L397.47,439.24 L397.14,439.01 L396.72,421.73 L396.29,439.49 L395.15,439.49 L393.62,430.19 L393.00,423.50 L392.61,427.76 L392.29,429.41 L391.98,434.49 L391.11,439.40 L389.99,439.06 L388.90,439.59 L388.27,431.50 L387.63,439.03 L386.71,439.08 L385.75,439.96 L385.23,440.00 L384.70,439.68 L383.85,439.57 L383.25,440.00 L382.65,436.41 L381.51,425.07 L380.65,416.34 L380.04,410.43 L380.00,410.00 L379.44,413.69 L378.61,419.25 L377.93,423.76 L377.44,426.77 L376.82,431.23 L376.19,435.12 L375.55,439.45 L374.36,438.99 L373.34,439.93 L372.51,439.20 L371.46,439.27 L370.91,439.87 L370.35,439.51 L369.72,439.61 L369.12,439.05 L368.52,439.25 L367.81,439.29 L367.18,424.88 L366.55,439.06 L365.21,439.08 L364.45,439.71 L364.01,439.94 L363.57,439.30 L362.92,439.06 L362.28,439.30 L361.65,439.56 L361.04,439.99 L360.63,438.43 L360.21,439.20 L359.53,439.68 L359.01,440.00 L358.49,439.03 L357.58,438.91 L356.04,438.88 L355.17,439.29 L354.85,428.45 L354.53,439.55 L353.48,438.86 L352.80,439.15 L352.22,431.66 L351.63,440.00 L350.07,439.74 L348.57,439.63 L347.60,439.99 L347.23,439.92 L346.85,439.77 L345.98,439.76 L345.62,424.09 L345.27,439.88 L344.75,439.70 L344.12,438.39 L343.49,439.30 L341.94,439.16 L341.14,439.18 L340.50,439.40 L339.86,439.66 L339.18,439.08 L338.70,433.03 L338.22,439.07 L337.70,439.62 L337.24,440.00 L336.79,439.94 L335.92,439.22 L335.52,439.21 L335.12,439.03 L333.63,439.57 L332.73,439.94 L332.26,439.09 L331.80,439.61 L330.68,439.77 L330.12,440.00 L329.56,439.44 L328.13,439.25 L327.71,439.47 L327.23,434.09 L326.74,439.62 L325.55,439.71 L324.12,439.91 L322.75,439.47 L322.35,439.41 L321.75,439.95 L321.16,439.61 L320.14,439.80 L319.74,428.02 L319.33,439.83 L318.30,438.80 L317.35,439.33 L316.73,439.65 L316.29,439.06 L315.85,439.39 L314.73,439.41 L314.26,440.00 L313.78,439.87 L312.76,439.83 L312.24,439.66 L311.72,439.04 L310.80,439.48 L310.19,438.51 L309.57,439.85 L308.11,439.84 L307.34,439.63 L306.24,439.58 L305.51,439.40 L305.08,435.83 L304.65,439.62 L303.35,439.25 L302.52,439.49 L301.27,439.18 L300.65,439.33 L300.26,439.75 L299.88,439.92 L299.50,439.14 L299.09,439.48 L298.49,439.07 L297.89,439.61 L297.09,439.50 L296.17,439.58 L295.72,437.99 L295.27,439.21 L293.77,439.47 L292.64,438.84 L291.62,439.04 L290.99,440.00 L290.36,439.86 L289.32,439.52 L287.82,438.89 L287.30,439.00 L286.77,436.85 L286.23,440.00 L284.66,439.64 L283.91,439.22 L283.40,440.00 L282.90,439.55 L282.16,439.63 L281.80,439.07 L281.16,429.46 L280.52,439.17 L279.44,439.90 L278.90,426.29 L278.36,439.46 L276.61,416.79 L275.29,406.16 L275.00,403.00 L274.04,404.07 L272.63,421.56 L270.81,415.41 L269.28,437.98 L268.24,422.90 L267.28,438.26 L266.32,412.66 L265.37,436.16 L264.17,413.31 L262.51,435.52 L261.11,417.38 L260.02,432.73 L258.46,411.36 L257.55,433.93 L256.37,417.31 L254.55,433.44 L253.07,425.65 L251.93,437.26 L250.53,426.10 L249.30,434.07 L247.58,417.10 L245.95,437.76 L244.49,417.79 L243.28,436.29 L242.16,424.15 L240.70,431.69 L239.61,423.02 L238.56,430.74 L237.59,404.52 L236.52,432.07 L234.69,410.63 L233.24,435.56 L232.10,403.78 L230.87,430.11 L229.56,417.11 L228.55,430.17 L227.46,422.58 L226.03,430.14 L224.77,422.31 L223.19,403.19 L223.00,400.00 L221.76,414.43 L220.81,425.84 L218.97,420.13 L217.91,429.68 L217.01,414.80 L215.73,429.35 L214.43,413.31 L212.87,429.00 L211.97,412.99 L211.05,430.34 L210.22,407.71 L209.32,430.56 L208.40,412.30 L206.73,426.39 L205.43,405.42 L204.06,430.30 L203.16,404.99 L201.66,428.63 L200.74,413.87 L199.40,400.00 L198.98,407.99 L197.70,420.92 L196.45,429.96 L195.43,401.98 L194.26,424.38 L192.74,404.03 L191.21,427.44 L190.24,413.93 L188.56,425.31 L187.37,404.59 L187.00,400.00 L186.32,410.75 L184.67,408.90 L183.11,425.18 L181.59,415.42 L180.51,424.73 L178.67,413.71 L177.10,422.93 L176.80,420.00 L176.20,390.00 L175.30,389.00 L171.00,384.00 L168.00,382.00 L167.00,380.00Z" fill="#3aa97b"/>
  </g>
  <rect x="168" y="175" width="566" height="1" fill="#ffffff" opacity="0.3"/>
  <rect x="168" y="293" width="566" height="1" fill="#ffffff" opacity="0.28"/>
  <rect x="168" y="305" width="566" height="1" fill="#26503f"/>
  <rect x="168" y="317" width="566" height="1" fill="#ffffff" opacity="0.28"/>
  <rect x="168" y="435" width="566" height="1" fill="#ffffff" opacity="0.28"/>
  <line x1="167.25" y1="157" x2="167.25" y2="441" stroke="#0c0c0c" stroke-width="1.8"/>
  <line x1="167.25" y1="157.5" x2="167.25" y2="441" stroke="#d2b032" stroke-width="1.1" stroke-dasharray="1.2 1.2"/>
  <rect x="184.7" y="169" width="1" height="2.5" fill="#7a7a7a"/>
<rect x="202.9" y="167" width="1" height="4.5" fill="#8a8a8a"/>
<rect x="221.1" y="169" width="1" height="2.5" fill="#7a7a7a"/>
<rect x="239.3" y="167" width="1" height="4.5" fill="#8a8a8a"/>
<rect x="257.5" y="169" width="1" height="2.5" fill="#7a7a7a"/>
<rect x="275.7" y="167" width="1" height="4.5" fill="#8a8a8a"/>
<rect x="293.9" y="169" width="1" height="2.5" fill="#7a7a7a"/>
<rect x="312.1" y="167" width="1" height="4.5" fill="#8a8a8a"/>
<rect x="330.3" y="169" width="1" height="2.5" fill="#7a7a7a"/>
<rect x="348.5" y="167" width="1" height="4.5" fill="#8a8a8a"/>
<rect x="366.7" y="169" width="1" height="2.5" fill="#7a7a7a"/>
<rect x="384.9" y="167" width="1" height="4.5" fill="#8a8a8a"/>
<rect x="403.1" y="169" width="1" height="2.5" fill="#7a7a7a"/>
<rect x="421.3" y="167" width="1" height="4.5" fill="#8a8a8a"/>
<rect x="439.5" y="169" width="1" height="2.5" fill="#7a7a7a"/>
<rect x="457.7" y="167" width="1" height="4.5" fill="#8a8a8a"/>
<rect x="475.9" y="169" width="1" height="2.5" fill="#7a7a7a"/>
<rect x="494.1" y="167" width="1" height="4.5" fill="#8a8a8a"/>
<rect x="512.3" y="169" width="1" height="2.5" fill="#7a7a7a"/>
<rect x="530.5" y="167" width="1" height="4.5" fill="#8a8a8a"/>
<rect x="548.7" y="169" width="1" height="2.5" fill="#7a7a7a"/>
<rect x="566.9" y="167" width="1" height="4.5" fill="#8a8a8a"/>
<rect x="585.1" y="169" width="1" height="2.5" fill="#7a7a7a"/>
<rect x="603.3" y="167" width="1" height="4.5" fill="#8a8a8a"/>
<rect x="621.5" y="169" width="1" height="2.5" fill="#7a7a7a"/>
<rect x="639.7" y="167" width="1" height="4.5" fill="#8a8a8a"/>
<rect x="657.9" y="169" width="1" height="2.5" fill="#7a7a7a"/>
<rect x="676.1" y="167" width="1" height="4.5" fill="#8a8a8a"/>
<rect x="694.3" y="169" width="1" height="2.5" fill="#7a7a7a"/>
<rect x="712.5" y="167" width="1" height="4.5" fill="#8a8a8a"/>
<rect x="730.7" y="169" width="1" height="2.5" fill="#7a7a7a"/>
  <g font-family="Liberation Sans">
  <text x="167.5" y="165" font-size="6" fill="#c8c8c8">00:</text>
<text x="203.4" y="165" font-size="6" fill="#c8c8c8" text-anchor="middle">00:10</text>
<text x="239.8" y="165" font-size="6" fill="#c8c8c8" text-anchor="middle">00:21</text>
<text x="276.2" y="165" font-size="6" fill="#c8c8c8" text-anchor="middle">00:31</text>
<text x="312.6" y="165" font-size="6" fill="#c8c8c8" text-anchor="middle">00:42</text>
<text x="349.0" y="165" font-size="6" fill="#c8c8c8" text-anchor="middle">00:52</text>
<text x="385.4" y="165" font-size="6" fill="#c8c8c8" text-anchor="middle">01:03</text>
<text x="421.8" y="165" font-size="6" fill="#c8c8c8" text-anchor="middle">01:13</text>
<text x="458.2" y="165" font-size="6" fill="#c8c8c8" text-anchor="middle">01:24</text>
<text x="494.6" y="165" font-size="6" fill="#c8c8c8" text-anchor="middle">01:34</text>
<text x="531.0" y="165" font-size="6" fill="#c8c8c8" text-anchor="middle">01:45</text>
<text x="567.4" y="165" font-size="6" fill="#c8c8c8" text-anchor="middle">01:55</text>
<text x="603.8" y="165" font-size="6" fill="#c8c8c8" text-anchor="middle">02:06</text>
<text x="640.2" y="165" font-size="6" fill="#c8c8c8" text-anchor="middle">02:16</text>
<text x="676.6" y="165" font-size="6" fill="#c8c8c8" text-anchor="middle">02:27</text>
<text x="713.0" y="165" font-size="6" fill="#c8c8c8" text-anchor="middle">02:37</text>
  </g>
</svg>

<svg class="abs" style="left:0;top:0" width="800" height="508" viewBox="0 0 800 508">
  <defs>
    <linearGradient id="lg" x1="0" y1="0" x2="1" y2="1">
      <stop offset="0" stop-color="#5fa0f8"/><stop offset="1" stop-color="#3c64ee"/>
    </linearGradient>
    <linearGradient id="av" x1="0" y1="0" x2="1" y2="1">
      <stop offset="0" stop-color="#3e87ea"/><stop offset="1" stop-color="#31c7a6"/>
    </linearGradient>
  </defs>
  <!-- logo -->
  <circle cx="17" cy="25" r="9.3" fill="url(#lg)"/>
  <rect x="12.9" y="19.6" width="2.5" height="6" fill="#ffffff" opacity="0.3"/>
  <path d="M12.9 29.8 L12.9 25.2 L18.2 20.1 L21.8 20.1 L15.4 26.2 L15.4 29.8 Z" fill="#ffffff"/>
  <path d="M16.1 25.3 L17.9 23.6 L21.7 29.8 L18.6 29.8 Z" fill="#ffffff"/>
  <!-- headphones -->
  <g fill="#b0b0b0">
    <path d="M14 75 v-2.5 a5 5 0 0 1 10 0 v2.5 h-1.3 v-2.5 a3.7 3.7 0 0 0 -7.4 0 v2.5z"/>
    <rect x="13.8" y="72.8" width="2.8" height="5" rx="0.8"/>
    <rect x="21.4" y="72.8" width="2.8" height="5" rx="0.8"/>
  </g>
  <!-- podcasts -->
  <g fill="none" stroke="#b0b0b0">
    <path d="M15.7 100.4 A4.8 4.8 0 1 1 22.3 100.4" stroke-width="1.1"/>
    <path d="M17.3 98.6 A2.6 2.6 0 1 1 20.7 98.6" stroke-width="1"/>
  </g>
  <circle cx="19" cy="96.6" r="1.3" fill="#b0b0b0"/>
  <rect x="18.1" y="98.4" width="1.8" height="4.4" rx="0.8" fill="#b0b0b0"/>
  <!-- radio -->
  <g fill="#b0b0b0">
    <rect x="13.7" y="118.3" width="10.6" height="7.3" rx="0.8"/>
    <rect x="15" y="116.2" width="1" height="2.5"/>
  </g>
  <rect x="15" y="119.6" width="8" height="1.6" fill="#2b2b2b"/>
  <circle cx="16.6" cy="123.3" r="0.9" fill="#2b2b2b"/>
  <!-- history -->
  <circle cx="18.85" cy="165.85" r="5.15" fill="#b0b0b0"/>
  <path d="M18.4 162.6 v3.7 h2.6" fill="none" stroke="#2b2b2b" stroke-width="1.2"/>
  <!-- tools briefcase -->
  <g fill="#f0f0f0">
    <path d="M16.8 207.5 v-2 h4.4 v2 h-1 v-1 h-2.4 v1z"/>
    <rect x="13.7" y="207.3" width="10.6" height="8" rx="0.8"/>
  </g>
  <rect x="13.7" y="210.5" width="10.6" height="1" fill="#33435d"/>
  <rect x="16" y="209.8" width="1.4" height="2.2" fill="#f0f0f0"/>
  <rect x="20.6" y="209.8" width="1.4" height="2.2" fill="#f0f0f0"/>
  <!-- AI -->
  <rect x="14.1" y="229.4" width="9.7" height="9.6" fill="#b0b0b0"/>
  <path d="M16.2 237 L18.1 231.9 L20 237 M17 235.2 h2.3 M21.6 233.4 v3.6" fill="none" stroke="#2b2b2b" stroke-width="1.05"/>
  <circle cx="21.6" cy="232.1" r="0.6" fill="#2b2b2b"/>
  <!-- bottom panel -->
  <g transform="translate(26.3 479.2)" fill="#7a7a7a">
    <circle r="3.6"/>
    <g>
      <rect x="-1.3" y="-5.3" width="2.6" height="10.6" rx="0.6"/>
      <rect x="-1.3" y="-5.3" width="2.6" height="10.6" rx="0.6" transform="rotate(60)"/>
      <rect x="-1.3" y="-5.3" width="2.6" height="10.6" rx="0.6" transform="rotate(120)"/>
    </g>
    <circle r="1.6" fill="#353535"/>
  </g>
  <circle cx="62.7" cy="478.2" r="12.6" fill="#1c2a2c"/>
  <circle cx="62.7" cy="478.2" r="12.0" fill="url(#av)"/>
  <circle cx="62" cy="474" r="3.2" fill="#cfe6f6"/>
  <path d="M55.8 483 a6.2 5 0 0 1 12.4 0 v0.8 h-12.4z" fill="#cfe6f6"/>
  <path d="M70.7 479.6 l4.6 2.7 v5.3 l-4.6 2.7 -4.6 -2.7 v-5.3z" fill="#f0b52b" stroke="#2a2616" stroke-width="0.8"/>
  <path d="M69.2 483 l1.5 3.4 1.5 -3.4" fill="none" stroke="#fff3c8" stroke-width="0.9"/>
  <rect x="94" y="474.7" width="10.3" height="9.1" fill="#7a7a7a"/>
  <path d="M95.6 476.4 L99.15 479.6 L102.7 476.4" fill="none" stroke="#4c4c4c" stroke-width="1"/>
  <!-- window controls -->
  <g fill="#a8a8a8">
    <rect x="713.8" y="11.9" width="8.3" height="1.2"/>
    <rect x="713.8" y="15.4" width="8.3" height="1.2"/>
    <rect x="713.8" y="18.8" width="8.3" height="1.2"/>
    <rect x="736.5" y="15.4" width="6.4" height="1.2"/>
  </g>
  <rect x="758.3" y="12.4" width="7" height="7.4" fill="none" stroke="#a8a8a8" stroke-width="1.1"/>
  <path d="M780.2 13 l6.4 6.4 M786.6 13 l-6.4 6.4" stroke="#a8a8a8" stroke-width="1.1"/>
  <!-- dialog close -->
  <path d="M729 89 l7.2 7.2 M736.2 89 l-7.2 7.2" stroke="#8a8a8a" stroke-width="1"/>
</svg>

<svg class="abs" style="left:0;top:0" width="800" height="508" viewBox="0 0 800 508">
  <!-- transport -->
  <g fill="#e2e2e2">
    <path d="M156.8 114.7 L163.3 118 L156.8 121.3z"/>
    <rect x="180.2" y="115" width="6.2" height="6"/>
    <path d="M226.5 118 L230.6 114.7 V121.3z M230.8 118 L235.2 114.7 V121.3z"/>
    <path d="M249.8 114.7 L254.1 118 L249.8 121.3z M254.1 114.7 L258.5 118 L254.1 121.3z"/>
    <rect x="275" y="114.7" width="1.4" height="6.6"/>
    <path d="M281.3 114.7 L276.4 118 L281.3 121.3z"/>
    <rect x="303" y="114.7" width="1.4" height="6.6"/>
    <path d="M298.2 114.7 L303.1 118 L298.2 121.3z"/>
  </g>
  <g fill="none" stroke="#e2e2e2" stroke-width="1.1">
    <path d="M204.3 120.2 a1 1 0 0 1 -0.7 -1 v-2.7 a1.3 1.3 0 0 1 1.3 -1.3 h5.8"/>
    <path d="M210.3 115.5 a1 1 0 0 1 0.5 0.9 v2.9 a1.3 1.3 0 0 1 -1.3 1.3 h-5.8"/>
  </g>
  <path d="M209.2 113.9 l1.9 1.3 -1.9 1.3z M205.6 119.6 l-1.9 1.3 1.9 1.3z" fill="#e2e2e2"/>
  <!-- edit toolbar: disabled -->
  <g fill="none" stroke="#515151" stroke-width="1.05">
    <path d="M156.5 142.8 h5 a2.8 2.8 0 0 1 0 5.6 h-4"/>
    <path d="M158.5 140.8 l-2 2 2 2"/>
    <path d="M186.5 142.8 h-5 a2.8 2.8 0 0 0 0 5.6 h4"/>
    <path d="M184.5 140.8 l2 2 -2 2"/>
    <path d="M203.5 140.5 l6.5 6 M210.3 140.5 l-6.5 6"/>
    <circle cx="204.2" cy="147.3" r="1.7"/>
    <circle cx="209.6" cy="147.3" r="1.7"/>
    <rect x="226.3" y="142.2" width="6" height="6.8" rx="0.6"/>
    <path d="M228.8 142.2 v-1.9 h5.9 v6.8 h-2.4"/>
    <rect x="250.3" y="142.2" width="6" height="6.8" rx="0.6"/>
    <path d="M252.8 142.2 v-1.9 h5.9 v6.8 h-2.4"/>
    <path d="M251.9 145 h2.8 M251.9 146.8 h2.8"/>
    <path d="M276 140 v7.4 h6.2 v1.5 M274.3 141.8 h6.2 v5.6"/>
    <path d="M297.2 141.6 h9 M300.2 141.6 v-1.2 h3 v1.2"/>
    <path d="M298.3 141.6 v7.4 h6.8 v-7.4"/>
    <path d="M301.7 144 v3"/>
  </g>
  <!-- edit toolbar: enabled -->
  <g fill="none" stroke="#8c8c8c" stroke-width="1.1">
    <path d="M321.2 142.6 h2.2 l3.4 -2.2 v8 l-3.4 -2.2 h-2.2z"/>
    <path d="M328.6 142.2 a2.8 2.8 0 0 1 0 4.4"/>
    <path d="M344.3 140.2 v8 h9.6"/>
    <path d="M346.3 146.4 l3 -3.8 3 3.8"/>
    <path d="M368.5 140.6 v7.9 M377.5 140.6 v7.9"/>
    <path d="M392 140.6 v7.9 M401 140.6 v7.9"/>
    <path d="M416.2 148.2 l7.5 -7.2 v7.2z"/>
    <path d="M440.5 141 v7.2 h7.3z"/>
  </g>
  <g fill="#8c8c8c">
    <path d="M370 144.5 l3.4 -2.4 v4.8z"/>
    <rect x="374.6" y="144" width="1.3" height="1.1"/>
    <path d="M393.6 144.5 l3.4 -2.4 v4.8z"/>
    <path d="M397.6 144.5 l1.2 -1.2 1.2 1.2 -1.2 1.2z"/>
    <circle cx="467.2" cy="141.2" r="0.9"/>
    <circle cx="463.3" cy="147.6" r="1.1"/>
    <circle cx="471.2" cy="147.6" r="1.1"/>
  </g>
  <path d="M467.2 141.2 v4 l-3.9 2.4 M467.2 145.2 l4 2.4" fill="none" stroke="#8c8c8c" stroke-width="1.1"/>
  <!-- gutter -->
  <rect x="148" y="232" width="14" height="9.5" rx="4.7" fill="#2a2a2a"/>
  <path d="M152.9 234.2 v5.2 h3.8" fill="none" stroke="#3f6ee0" stroke-width="1.6"/>
  <rect x="148.3" y="372" width="13.4" height="8.6" rx="4.3" fill="#2a2a2a"/>
  <text x="155" y="379" font-size="7" font-weight="bold" fill="#3f6ee0" text-anchor="middle" font-family="Liberation Sans">R</text>
  <g fill="none" stroke="#8c8c8c" stroke-width="1">
    <circle cx="154.3" cy="403.8" r="3.1"/>
    <path d="M156.6 406.1 l2 2 M152.8 403.8 h3 M154.3 402.3 v3"/>
    <circle cx="154.3" cy="421.8" r="3.1"/>
    <path d="M156.6 424.1 l2 2 M152.8 421.8 h3"/>
  </g>
  <!-- bottom toolbar -->
  <path d="M153.8 446.2 A3.3 3.3 0 1 1 150.9 447.8" fill="none" stroke="#555" stroke-width="1"/>
  <path d="M150.6 445.4 v2.6 h2.6" fill="none" stroke="#555" stroke-width="1"/>
  <path d="M172 449.5 h7 M175.5 446 v7" stroke="#9c9c9c" stroke-width="1"/>
  <path d="M191.8 449.5 h6.4" stroke="#4f4f4f" stroke-width="1"/>
  <rect x="207" y="444.7" width="528" height="12.3" rx="6.1" fill="#3c3c3c"/>
  <rect x="146.7" y="460.7" width="588.3" height="4.5" fill="#3a3a3a"/>
</svg>
</body></html>
